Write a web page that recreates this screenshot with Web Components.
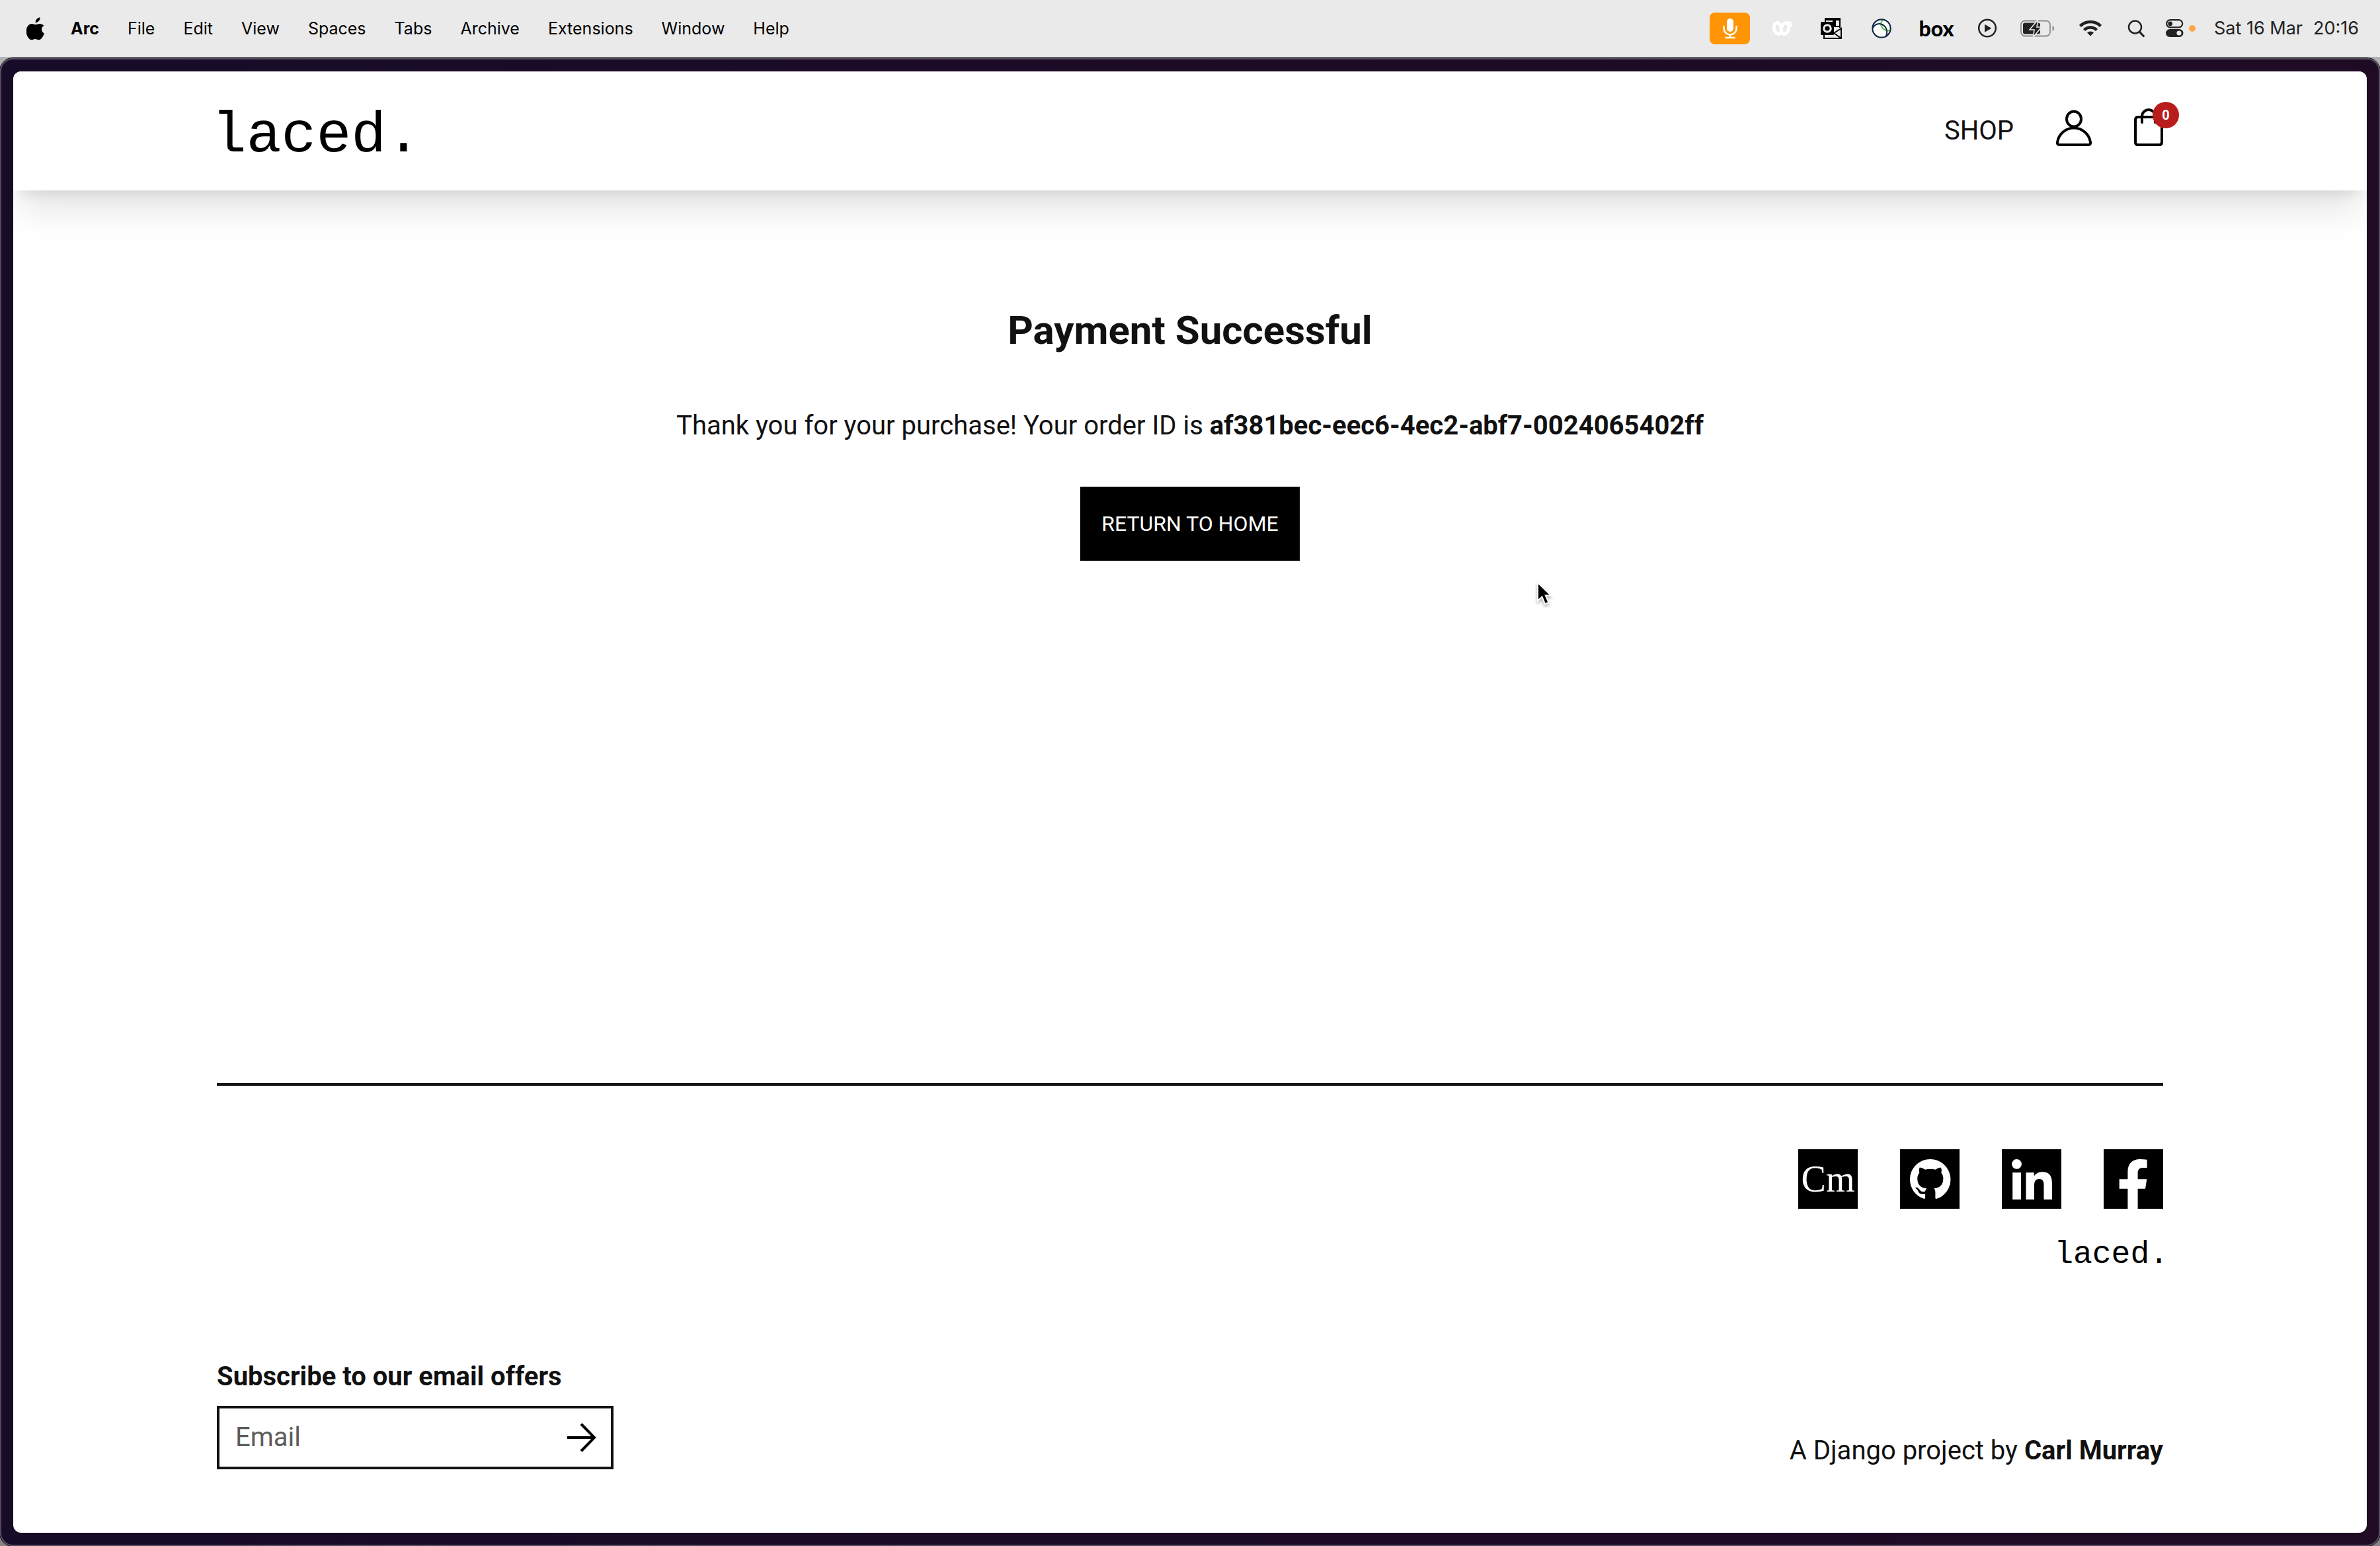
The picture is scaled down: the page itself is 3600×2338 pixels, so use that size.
<!DOCTYPE html>
<html lang="en">
<head>
<meta charset="utf-8">
<title>laced. – Payment Successful</title>
<style>
  body {
    margin: 0;
    min-height: 100vh;
    display: flex;
    flex-direction: column;
    gap: 2px;
    background: linear-gradient(#b4b4b4, #848484);
    font-family: Roboto, sans-serif;
    color: #111;
  }
</style>
</head>
<body>
<menu-bar>
  <menu-item slot="menu" strong>Arc</menu-item>
  <menu-item slot="menu">File</menu-item>
  <menu-item slot="menu">Edit</menu-item>
  <menu-item slot="menu">View</menu-item>
  <menu-item slot="menu">Spaces</menu-item>
  <menu-item slot="menu">Tabs</menu-item>
  <menu-item slot="menu">Archive</menu-item>
  <menu-item slot="menu">Extensions</menu-item>
  <menu-item slot="menu">Window</menu-item>
  <menu-item slot="menu">Help</menu-item>
  <span slot="date">Sat 16 Mar</span>
  <span slot="time">20:16</span>
</menu-bar>

<browser-window>
  <site-header></site-header>
  <order-confirmation order="af381bec-eec6-4ec2-abf7-0024065402ff">Payment Successful</order-confirmation>
  <site-footer></site-footer>
</browser-window>

<mouse-pointer></mouse-pointer>

<script>
  function define(name, html) {
    const template = document.createElement('template');
    template.innerHTML = html;
    customElements.define(name, class extends HTMLElement {
      constructor() {
        super();
        this.attachShadow({ mode: 'open' }).append(template.content.cloneNode(true));
      }
      connectedCallback() {
        for (const node of this.shadowRoot.querySelectorAll('[data-text]')) {
          node.textContent = this.getAttribute(node.dataset.text) || '';
        }
        for (const node of this.shadowRoot.querySelectorAll('[data-label]')) {
          node.setAttribute('aria-label', this.getAttribute(node.dataset.label) || '');
        }
      }
    });
  }

  define('menu-item', `
    <style>
      :host { display: block; }
      button { all: unset; display: block; font: inherit; cursor: default; }
      :host([strong]) button { font-weight: 700; }
    </style>
    <button type="button"><slot></slot></button>`);

  define('menu-bar', `
    <style>
      :host {
        display: flex; align-items: center; justify-content: space-between;
        height: 86px; padding: 0 32px 0 40px;
        background: #eaeaea; color: #000;
        font: 25px/32px Inter, sans-serif;
      }
      .menus, .status, .icons, .clock { display: flex; align-items: center; }
      .menus { gap: 43px; }
      .menus svg { margin-right: -4px; }
      .status { gap: 28px; color: #222; }
      .icons { gap: 32px; }
      .clock { gap: 16px; font-size: 27px; }
      .mic { display: flex; align-items: center; justify-content: center; width: 61px; height: 48px; border-radius: 8px; background: #ff9505; }
      .box { width: 58px; text-align: center; font: 900 32px/32px Lato, sans-serif; color: #000; }
      svg { display: block; }
    </style>
    <nav class="menus">
      <svg width="28" height="40" viewBox="0 0 28 40" aria-label="Apple">
        <path d="M20.6 3.2c.2 2.1-.6 4.100-1.800 5.600-1.300 1.500-3.300 2.600-5.200 2.500-.2-2 .7-4.100 1.800-5.400 1.300-1.500 3.500-2.600 5.200-2.700zM26.300 15.800c-2.200 1.400-3.300 3.300-3.300 5.700 0 2.900 1.700 5 4 6-.6 1.900-1.500 3.700-2.700 5.400-1.500 2.300-3.100 4.400-5.500 4.400-2.300 0-3-1.400-5.600-1.400-2.600 0-3.500 1.400-5.600 1.400-2.300 0-4-2.200-5.500-4.400C-.8 28.500-1.300 19.600 2.500 15.700c1.500-1.700 3.600-2.700 5.800-2.700 2.300 0 3.800 1.300 5.700 1.300 1.900 0 3.100-1.300 5.700-1.300 2.600 0 4.900 1 6.600 2.800z"/>
      </svg>
      <slot name="menu"></slot>
    </nav>
    <div class="status">
      <div class="icons">
        <span class="mic">
          <svg width="24" height="32" viewBox="0 0 24 32" fill="none" stroke="#fff" stroke-width="2.400" stroke-linecap="round">
            <rect x="7" y="1" width="10" height="20" rx="5" fill="#fff" stroke="none"/>
            <path d="M2.500 13v3a9.500 9.500 0 0 0 19 0v-3M12 25.500V30M5.500 30h13"/>
          </svg>
        </span>
        <svg width="37" height="32" viewBox="0 0 37 32" fill="none" stroke="#fff" stroke-width="5">
          <ellipse cx="10" cy="16" rx="5.500" ry="8.500" transform="rotate(-14 10 16)"/>
          <ellipse cx="21" cy="16" rx="5.500" ry="8.500" transform="rotate(14 21 16)"/>
          <path d="M25 6.500c5-1 7 4 3.500 7" stroke-width="2.500"/>
        </svg>
        <svg width="44" height="32" viewBox="0 0 44 32">
          <g fill="none" stroke="#000" stroke-width="2">
            <path d="M13 6V1h22v14M11 26v5h26V16l-11 7M26 23l11 8M22 13h13M28 4v9"/>
          </g>
          <path d="M12 0h24v4H12zM24 4h4v9h-4z"/>
          <path d="M14 4h5v2h-5z" fill="#eaeaea"/>
          <rect x="6" y="6" width="20" height="20" rx="1.500"/>
          <circle cx="16" cy="16" r="5.200" fill="none" stroke="#eaeaea" stroke-width="3.200"/>
        </svg>
        <svg width="44" height="32" viewBox="0 0 44 32" fill="none" stroke-width="2">
          <circle cx="22" cy="16" r="15.500" fill="#fff"/>
          <path d="M24 3c-4 4-4 9 0 13 3 3 7 4 11 3" stroke="#5dc14a"/>
          <path d="M9 15c3-6 9-7 14-5 6 3 9 10 6 17" stroke="#12284b"/>
          <circle cx="22" cy="16" r="13.700" stroke="#12284b" stroke-width="2.200"/>
        </svg>
        <span class="box">box</span>
        <svg width="32" height="32" viewBox="0 0 32 32">
          <circle cx="16" cy="15.500" r="12.800" fill="none" stroke="#222" stroke-width="2.500"/>
          <path d="M12.500 10.500v10.500l9-5.200z" fill="#222" stroke="#222" stroke-width="1" stroke-linejoin="round"/>
        </svg>
        <svg width="55" height="32" viewBox="0 0 55 32">
          <rect x="3" y="4.500" width="44" height="23" rx="6" fill="none" stroke="#8c8c8c" stroke-width="1.800"/>
          <path d="M50.500 12c3.500 1 3.500 7 0 8z" fill="#8c8c8c"/>
          <rect x="6" y="7.500" width="26" height="17" rx="3" fill="#222"/>
          <path d="M28.500 3L16 18h7L21.500 29 34 14h-7z" fill="#222" stroke="#eaeaea" stroke-width="1.600"/>
        </svg>
        <svg width="42" height="32" viewBox="0 0 42 32" fill="none" stroke="#222" stroke-width="4.500">
          <path d="M5.500 12.500a22 22 0 0 1 31 0M11.500 18.500a13.500 13.500 0 0 1 19 0"/>
          <path d="M16 22.500a7.500 7.500 0 0 1 10 0L21 27.500z" fill="#222" stroke="none"/>
        </svg>
        <svg width="29" height="32" viewBox="0 0 29 32" fill="none" stroke="#222" stroke-linecap="round">
          <circle cx="14.500" cy="14" r="9.500" stroke-width="2.500"/><path d="M21.500 21.500l5.800 6" stroke-width="3.200"/>
        </svg>
        <svg width="45" height="32" viewBox="0 0 45 32">
          <rect x="1.200" y="3.200" width="24" height="11.200" rx="5.600" fill="none" stroke="#222" stroke-width="2.200"/>
          <circle cx="6.700" cy="8.800" r="3.400" fill="#222"/>
          <rect x="0" y="17" width="26.500" height="12" rx="6" fill="#222"/>
          <circle cx="20" cy="23" r="3.600" fill="#eaeaea"/>
          <circle cx="40" cy="16" r="5" fill="#ffa648"/>
        </svg>
      </div>
      <div class="clock"><slot name="date"></slot><slot name="time"></slot></div>
    </div>`);

  define('browser-window', `
    <style>
      :host {
        flex: 1; display: flex; box-sizing: border-box; padding: 18px;
        border: 2px solid #54495f; border-radius: 20px;
        box-shadow: 0 0 0 1px #000;
        background: linear-gradient(90deg, #160c28, #1c0b26 40%, #1f0b24);
      }
      .page {
        flex: 1; display: flex; flex-direction: column; overflow: hidden;
        border-radius: 12px; background: #fff;
      }
    </style>
    <div class="page"><slot></slot></div>`);

  define('brand-logo', `
    <style>
      :host { display: block; margin: 0 -8px; }
      a { display: block; color: #000; text-decoration: none; font-family: "Liberation Mono", monospace; }
    </style>
    <a href="#">laced.</a>`);

  define('site-header', `
    <style>
      :host {
        display: block; position: relative; z-index: 1; background: #fff;
        box-shadow: 0 40px 50px -10px rgba(0,0,0,.1), 0 16px 20px -12px rgba(0,0,0,.1);
      }
      .bar {
        max-width: 2944px; height: 180px; margin: 0 auto;
        display: flex; align-items: center; justify-content: space-between;
      }
      brand-logo { padding-top: 16px; font-size: 88px; line-height: 100px; }
      nav { display: flex; align-items: center; gap: 64px; font-size: 40px; line-height: 56px; }
      a { color: inherit; text-decoration: none; }
      .bag { position: relative; }
      .count {
        position: absolute; top: -8px; right: -24px; width: 40px; height: 40px;
        border-radius: 50%; background: #b91c1c; color: #fff;
        font-size: 20px; line-height: 40px; font-weight: 700; text-align: center;
      }
      svg { display: block; fill: none; stroke: #000; stroke-width: 4; stroke-linecap: round; stroke-linejoin: round; }
    </style>
    <div class="bar">
      <brand-logo></brand-logo>
      <nav>
        <a href="#">SHOP</a>
        <a href="#" aria-label="Account">
          <svg width="54" height="72" viewBox="0 0 54 72">
            <ellipse cx="27" cy="18" rx="11" ry="11.500"/>
            <path d="M27 31.500C14 31.500 4 41 2 53c-.3 2.500.5 4 3 4h44c2.500 0 3.300-1.500 3-4C50 41 40 31.500 27 31.500z"/>
          </svg>
        </a>
        <a class="bag" href="#" aria-label="Bag">
          <svg width="44" height="72" viewBox="0 0 44 72">
            <path d="M6 15h32q4 0 4 4v34q0 4-4 4H6q-4 0-4-4V19q0-4 4-4zM12 23v-9a10 10 0 0 1 20 0v9"/>
          </svg>
          <span class="count">0</span>
        </a>
      </nav>
    </div>`);

  define('order-confirmation', `
    <style>
      :host { flex: 1; display: flex; flex-direction: column; align-items: center; padding: 176px 0; text-align: center; }
      h1 { margin: 0 0 80px; font-size: 60px; line-height: 72px; font-weight: 700; }
      p { margin: 0 0 64px; font-size: 40px; line-height: 56px; }
      a { padding: 32px; background: #000; color: #fff; font-size: 32px; line-height: 48px; text-decoration: none; }
    </style>
    <h1><slot></slot></h1>
    <p>Thank you for your purchase! Your order ID is <strong data-text="order"></strong></p>
    <a href="#">RETURN TO HOME</a>`);

  define('social-link', `
    <style>
      :host { display: block; }
      a { display: flex; align-items: center; justify-content: center; width: 90px; height: 90px; background: #000; color: #fff; text-decoration: none; font: 56px/90px "Liberation Serif", serif; }
    </style>
    <a href="#" data-label="name"><slot></slot></a>`);

  define('subscribe-form', `
    <style>
      :host { display: block; width: 600px; }
      label { display: block; margin-bottom: 16px; font-size: 40px; line-height: 56px; font-weight: 700; }
      .field { display: flex; box-sizing: border-box; height: 96px; border: 4px solid #111; }
      input { flex: 1; min-width: 0; margin: 0; padding: 0 24px; border: 0; outline: 0; background: none; font: 40px/56px Roboto, sans-serif; color: #111; }
      input::placeholder { color: #5c5c5c; opacity: 1; }
      button { display: flex; align-items: center; padding: 0 20px; border: 0; background: none; }
    </style>
    <form>
      <label for="email">Subscribe to our email offers</label>
      <div class="field">
        <input id="email" type="email" placeholder="Email">
        <button type="button" aria-label="Subscribe">
          <svg width="48" height="48" viewBox="0 0 48 48" fill="none" stroke="#000" stroke-width="4">
            <path d="M2 24h42M23 3.500L43 24 23 44.500"/>
          </svg>
        </button>
      </div>
    </form>`);

  define('site-footer', `
    <style>
      :host { display: block; box-sizing: border-box; width: 100%; max-width: 2944px; margin: 0 auto; padding: 96px 0; border-top: 4px solid #111; }
      .brand { display: flex; flex-direction: column; align-items: flex-end; gap: 40px; margin-bottom: 128px; }
      .social { display: flex; gap: 64px; }
      .base { display: flex; align-items: flex-end; justify-content: space-between; }
      brand-logo { font-size: 48px; line-height: 58px; }
      p { margin: 0; font-size: 40px; line-height: 56px; }
      svg { display: block; fill: #fff; }
    </style>
    <div class="brand">
      <div class="social">
        <social-link name="Portfolio">Cm</social-link>
        <social-link name="GitHub">
          <svg width="90" height="90" viewBox="0 0 90 90"><path transform="translate(15 15) scale(3.840)" d="M8 0C3.580 0 0 3.580 0 8c0 3.540 2.290 6.530 5.470 7.590.4.070.55-.17.55-.38 0-.19-.01-.82-.01-1.490-2.010.37-2.530-.49-2.690-.94-.09-.23-.48-.94-.82-1.130-.28-.15-.68-.52-.01-.53.63-.01 1.080.58 1.230.82.72 1.210 1.870.87 2.330.66.07-.52.28-.87.51-1.070-1.780-.2-3.640-.89-3.640-3.950 0-.87.31-1.590.82-2.150-.08-.2-.36-1.020.08-2.120 0 0 .67-.21 2.200.82.64-.18 1.320-.27 2-.27.68 0 1.360.09 2 .27 1.530-1.040 2.200-.82 2.200-.82.44 1.100.16 1.920.08 2.120.51.56.82 1.270.82 2.150 0 3.070-1.870 3.750-3.650 3.950.29.25.54.73.54 1.480 0 1.070-.01 1.930-.01 2.200 0 .21.15.46.55.38A8.013 8.013 0 0 0 16 8c0-4.420-3.580-8-8-8z"/></svg>
        </social-link>
        <social-link name="LinkedIn">
          <svg width="90" height="90" viewBox="0 0 90 90"><circle cx="22.500" cy="22.400" r="7.400"/><path d="M16.200 35.300h12.700V76H16.200zM36.500 35.300h12.200v5.600c2-3.800 6.500-6.700 12.300-6.700 12.500 0 15 8 15 19.500V76H63.500V56c0-5 0-11-7-11s-7.500 5.500-7.500 11v20H36.500z"/></svg>
        </social-link>
        <social-link name="Facebook">
          <svg width="90" height="90" viewBox="0 0 90 90"><path d="M36.400 90V59.700H23.700V45.300h12.700V34c0-12.500 7.200-19 18.500-19 5.400 0 10.700.9 10.700.9v12h-6c-6 0-8 3.600-8 7.500v9.900h13.700l-2.300 14.400H51.600V90z"/></svg>
        </social-link>
      </div>
      <brand-logo></brand-logo>
    </div>
    <div class="base">
      <subscribe-form></subscribe-form>
      <p>A Django project by <strong>Carl Murray</strong></p>
    </div>`);

  /* The pointer floats freely over the window. */
  define('mouse-pointer', `
    <style>
      :host { position: absolute; left: 2322px; top: 876px; z-index: 2; pointer-events: none; }
      svg { display: block; filter: drop-shadow(0 3px 2px rgba(0,0,0,.3)); }
    </style>
    <svg width="30" height="44" viewBox="0 0 30 44">
      <path d="M4 5v27.500l6.500-6 4.500 11 5.500-2.300-4.700-10.700H24z" fill="#000" stroke="#fff" stroke-width="2"/>
    </svg>`);
</script>
</body>
</html>
